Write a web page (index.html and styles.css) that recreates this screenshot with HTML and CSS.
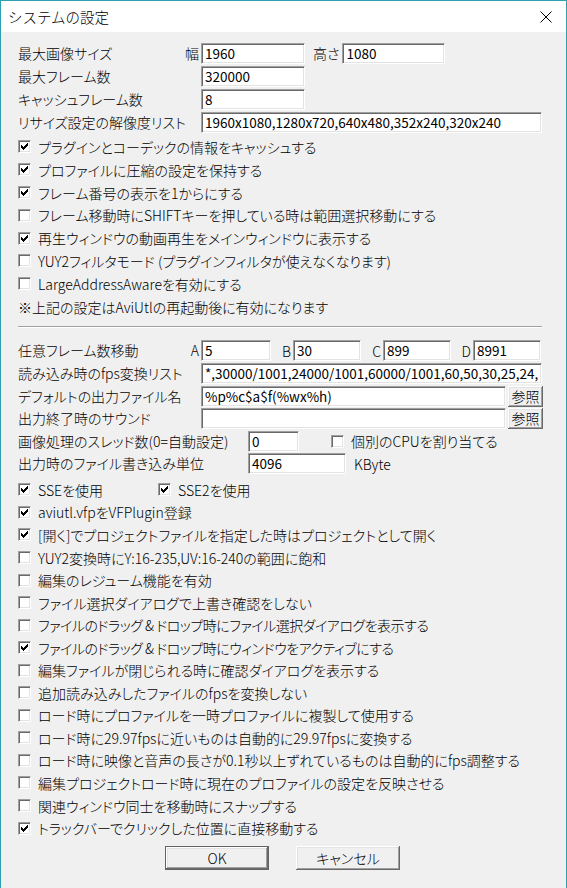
FILE: index.html
```html
<!DOCTYPE html>
<html lang="ja">
<head>
<meta charset="utf-8">
<title>システムの設定</title>
<link rel="stylesheet" href="styles.css">
</head>
<body>
<div class="window">
  <div class="titlebar">
    <span class="title">システムの設定</span>
    <svg class="close" width="12" height="12" viewBox="0 0 12 12"><path d="M0.5 0.5L11.5 11.5M11.5 0.5L0.5 11.5" stroke="#000" stroke-width="1" fill="none"/></svg>
  </div>
  <div class="content">
    <div class="rows">
      <div class="row"><span class="lbl">最大画像サイズ<span>幅</span></span><span class="field w104">1960</span><span class="sub">高さ</span><span class="field w103">1080</span></div>
      <div class="row"><span class="lbl">最大フレーム数</span><span class="field w104">320000</span></div>
      <div class="row"><span class="lbl">キャッシュフレーム数</span><span class="field w104">8</span></div>
      <div class="row"><span class="lbl">リサイズ設定の解像度リスト</span><span class="field w341">1960x1080,1280x720,640x480,352x240,320x240</span></div>
    </div>

    <div class="checks first">
      <div class="check"><span class="cb on"><svg viewBox="0 0 9 9" width="9" height="9"><path d="M1 3h1v3h-1zM2 4h1v3h-1zM3 5h1v3h-1zM4 4h1v3h-1zM5 3h1v3h-1zM6 2h1v3h-1zM7 1h1v3h-1z"/></svg></span>プラグインとコーデックの情報をキャッシュする</div>
      <div class="check"><span class="cb on"><svg viewBox="0 0 9 9" width="9" height="9"><path d="M1 3h1v3h-1zM2 4h1v3h-1zM3 5h1v3h-1zM4 4h1v3h-1zM5 3h1v3h-1zM6 2h1v3h-1zM7 1h1v3h-1z"/></svg></span>プロファイルに圧縮の設定を保持する</div>
      <div class="check"><span class="cb on"><svg viewBox="0 0 9 9" width="9" height="9"><path d="M1 3h1v3h-1zM2 4h1v3h-1zM3 5h1v3h-1zM4 4h1v3h-1zM5 3h1v3h-1zM6 2h1v3h-1zM7 1h1v3h-1z"/></svg></span>フレーム番号の表示を1からにする</div>
      <div class="check"><span class="cb"></span>フレーム移動時にSHIFTキーを押している時は範囲選択移動にする</div>
      <div class="check"><span class="cb on"><svg viewBox="0 0 9 9" width="9" height="9"><path d="M1 3h1v3h-1zM2 4h1v3h-1zM3 5h1v3h-1zM4 4h1v3h-1zM5 3h1v3h-1zM6 2h1v3h-1zM7 1h1v3h-1z"/></svg></span>再生ウィンドウの動画再生をメインウィンドウに表示する</div>
      <div class="check"><span class="cb"></span>YUY2フィルタモード (プラグインフィルタが使えなくなります)</div>
      <div class="check"><span class="cb"></span>LargeAddressAwareを有効にする</div>
      <div class="check note">※上記の設定はAviUtlの再起動後に有効になります</div>
    </div>

    <div class="sep"></div>

    <div class="rows2">
      <div class="row2"><span class="lbl">任意フレーム数移動<span>A</span></span><span class="field w70">5</span><span class="key">B</span><span class="field w68">30</span><span class="key">C</span><span class="field w68">899</span><span class="key">D</span><span class="field w68">8991</span></div>
      <div class="row2"><span class="lbl">読み込み時のfps変換リスト</span><span class="field w341">*,30000/1001,24000/1001,60000/1001,60,50,30,25,24,</span></div>
      <div class="row2"><span class="lbl">デフォルトの出力ファイル名</span><span class="field w305">%p%c$a$f(%wx%h)</span><button class="btn small">参照</button></div>
      <div class="row2"><span class="lbl">出力終了時のサウンド</span><span class="field w305"></span><button class="btn small">参照</button></div>
      <div class="row2"><span class="lbl l230">画像処理のスレッド数(0=自動設定)</span><span class="field w51">0</span><span class="check inline cpu"><span class="cb"></span>個別のCPUを割り当てる</span></div>
      <div class="row2"><span class="lbl l230">出力時のファイル書き込み単位</span><span class="field w98">4096</span><span class="unit">KByte</span></div>
    </div>

    <div class="checks second">
      <div class="check"><span class="inline sse"><span class="cb on"><svg viewBox="0 0 9 9" width="9" height="9"><path d="M1 3h1v3h-1zM2 4h1v3h-1zM3 5h1v3h-1zM4 4h1v3h-1zM5 3h1v3h-1zM6 2h1v3h-1zM7 1h1v3h-1z"/></svg></span>SSEを使用</span><span class="inline"><span class="cb on"><svg viewBox="0 0 9 9" width="9" height="9"><path d="M1 3h1v3h-1zM2 4h1v3h-1zM3 5h1v3h-1zM4 4h1v3h-1zM5 3h1v3h-1zM6 2h1v3h-1zM7 1h1v3h-1z"/></svg></span>SSE2を使用</span></div>
      <div class="check"><span class="cb on"><svg viewBox="0 0 9 9" width="9" height="9"><path d="M1 3h1v3h-1zM2 4h1v3h-1zM3 5h1v3h-1zM4 4h1v3h-1zM5 3h1v3h-1zM6 2h1v3h-1zM7 1h1v3h-1z"/></svg></span>aviutl.vfpをVFPlugin登録</div>
      <div class="check"><span class="cb on"><svg viewBox="0 0 9 9" width="9" height="9"><path d="M1 3h1v3h-1zM2 4h1v3h-1zM3 5h1v3h-1zM4 4h1v3h-1zM5 3h1v3h-1zM6 2h1v3h-1zM7 1h1v3h-1z"/></svg></span>[開く]でプロジェクトファイルを指定した時はプロジェクトとして開く</div>
      <div class="check"><span class="cb"></span>YUY2変換時にY:16-235,UV:16-240の範囲に飽和</div>
      <div class="check"><span class="cb"></span>編集のレジューム機能を有効</div>
      <div class="check"><span class="cb"></span>ファイル選択ダイアログで上書き確認をしない</div>
      <div class="check"><span class="cb"></span><span class="tight">ファイルのドラッグ &amp; ドロップ時にファイル選択ダイアログを表示する</span></div>
      <div class="check"><span class="cb on"><svg viewBox="0 0 9 9" width="9" height="9"><path d="M1 3h1v3h-1zM2 4h1v3h-1zM3 5h1v3h-1zM4 4h1v3h-1zM5 3h1v3h-1zM6 2h1v3h-1zM7 1h1v3h-1z"/></svg></span><span class="tight">ファイルのドラッグ &amp; ドロップ時にウィンドウをアクティブにする</span></div>
      <div class="check"><span class="cb"></span>編集ファイルが閉じられる時に確認ダイアログを表示する</div>
      <div class="check"><span class="cb"></span>追加読み込みしたファイルのfpsを変換しない</div>
      <div class="check"><span class="cb"></span>ロード時にプロファイルを一時プロファイルに複製して使用する</div>
      <div class="check"><span class="cb"></span>ロード時に29.97fpsに近いものは自動的に29.97fpsに変換する</div>
      <div class="check"><span class="cb"></span>ロード時に映像と音声の長さが0.1秒以上ずれているものは自動的にfps調整する</div>
      <div class="check"><span class="cb"></span>編集プロジェクトロード時に現在のプロファイルの設定を反映させる</div>
      <div class="check"><span class="cb"></span>関連ウィンドウ同士を移動時にスナップする</div>
      <div class="check"><span class="cb on"><svg viewBox="0 0 9 9" width="9" height="9"><path d="M1 3h1v3h-1zM2 4h1v3h-1zM3 5h1v3h-1zM4 4h1v3h-1zM5 3h1v3h-1zM6 2h1v3h-1zM7 1h1v3h-1z"/></svg></span>トラックバーでクリックした位置に直接移動する</div>
    </div>

    <div class="buttons">
      <button class="btn big default">OK</button>
      <button class="btn big">キャンセル</button>
    </div>
  </div>
</div>
</body>
</html>
```

FILE: styles.css
```css
html, body {
  margin: 0;
  padding: 0;
}
body {
  font-family: "Noto Sans CJK JP", "Noto Sans", sans-serif;
  font-weight: 300;
  color: #000;
  background: #f0f0f0;
}
.window {
  box-sizing: border-box;
  width: 567px;
  height: 888px;
  border: 1px solid #2ba1b3;
  border-bottom: none;
  background: #f0f0f0;
  display: flex;
  flex-direction: column;
  overflow: hidden;
}
.titlebar {
  flex: none;
  height: 31px;
  background: #fff;
  display: flex;
  align-items: center;
  justify-content: space-between;
  padding: 0 14px 0 7px;
}
.title {
  font-size: 14.5px;
  line-height: 31px;
}
.close {
  display: block;
}
.content {
  padding: 11px 0 0 17px;
  font-size: 14px;
  font-feature-settings: "palt";
}
.rows {
  display: flex;
  flex-direction: column;
  gap: 2px;
}
.row {
  display: flex;
  align-items: center;
  height: 21px;
  white-space: nowrap;
}
.lbl {
  flex: 0 0 183px;
  box-sizing: border-box;
  display: flex;
  justify-content: space-between;
  padding-right: 2px;
  line-height: 21px;
}
.lbl.l230 {
  flex-basis: 230px;
}
.sub {
  margin: 0 3px 0 8px;
  line-height: 21px;
}
.field {
  flex: none;
  box-sizing: border-box;
  height: 21px;
  background: #fff;
  border-top: 1px solid #a0a0a0;
  border-left: 1px solid #a0a0a0;
  border-right: 1px solid #fff;
  border-bottom: 1px solid #fff;
  box-shadow: inset 1px 1px #696969, inset -1px -1px #e3e3e3;
  font-size: 13.5px;
  font-weight: 400;
  font-feature-settings: normal;
  line-height: 19px;
  padding: 0 3px;
  white-space: nowrap;
  overflow: hidden;
}
.w104 { width: 104px; }
.w103 { width: 103px; }
.w341 { width: 341px; }
.w305 { width: 305px; }
.w70 { width: 70px; }
.w68 { width: 68px; }
.w51 { width: 51px; }
.w98 { width: 98px; }

.checks {
  display: flex;
  flex-direction: column;
}
.checks.first {
  margin-top: 2.6px;
}
.checks.first .check {
  height: 22.8px;
}
.checks.second {
  margin-top: 3.4px;
}
.checks.second .check {
  height: 22.55px;
}
.check {
  display: flex;
  align-items: center;
  gap: 7px;
  white-space: nowrap;
}
.tight {
  letter-spacing: -0.5px;
}
.inline {
  display: flex;
  align-items: center;
  gap: 7px;
}
.sse {
  width: 133px;
}
.cb {
  flex: none;
  box-sizing: border-box;
  width: 13px;
  height: 13px;
  background: #fff;
  border-top: 1px solid #a0a0a0;
  border-left: 1px solid #a0a0a0;
  border-right: 1px solid #fff;
  border-bottom: 1px solid #fff;
  box-shadow: inset 1px 1px #696969, inset -1px -1px #e3e3e3;
  display: flex;
  align-items: center;
  justify-content: center;
}
.cb svg {
  display: block;
  fill: #000;
  shape-rendering: crispEdges;
}
.sep {
  margin-top: 8px;
  width: 524px;
  height: 0;
  border-top: 1px solid #a0a0a0;
  border-bottom: 1px solid #fff;
}
.rows2 {
  margin-top: 11.7px;
  display: flex;
  flex-direction: column;
}
.row2 {
  display: flex;
  align-items: center;
  height: 22.6px;
  white-space: nowrap;
}
.key {
  flex: 0 0 22px;
  box-sizing: border-box;
  text-align: right;
  padding-right: 2px;
}
.cpu {
  margin-left: 32px;
}
.unit {
  margin-left: 8px;
}
.btn {
  box-sizing: border-box;
  font-family: inherit;
  font-weight: 300;
  font-size: 14px;
  font-feature-settings: "palt";
  color: #000;
  background: #f0f0f0;
  border: none;
  padding: 0;
  margin: 0;
  box-shadow: inset -1px -1px #696969, inset 1px 1px #fff, inset -2px -2px #a0a0a0, inset 2px 2px #e3e3e3;
}
.btn.small {
  flex: none;
  width: 35px;
  height: 21px;
  margin-left: 2px;
  line-height: 19px;
}
.buttons {
  margin-top: 6.5px;
  display: flex;
  gap: 27px;
  padding-left: 147px;
}
.btn.big {
  width: 104px;
  height: 24px;
}
.btn.default {
  border: 1px solid #646464;
}
```
